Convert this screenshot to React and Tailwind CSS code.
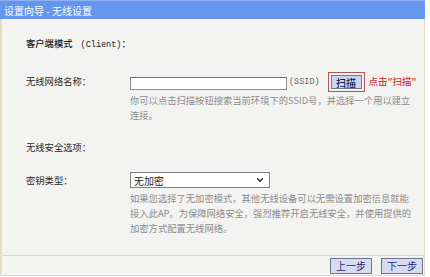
import { ChevronDown } from 'lucide-react';

// ── Wizard page: client mode wireless settings ────────────────────
const CJK = "font-['Noto_Sans_CJK_SC','Noto_Sans',sans-serif]";

function Help({ lines }) {
  return (
    <div className="text-[9.3px] leading-[15px] text-[#8c8c8c]">
      {lines.map(l => (
        <p key={l} className="whitespace-nowrap">{l}</p>
      ))}
    </div>
  );
}

function Btn({ children }) {
  return (
    <button className="w-[42px] h-[16px] border border-[#707090] bg-[#d6daf2] text-[10px] leading-[14px] text-[#1c2a6a]">
      {children}
    </button>
  );
}

export default function App() {
  return (
    <div className={`w-[430px] h-[277px] bg-white overflow-hidden ${CJK}`}>
      <div className="w-[425px] h-[276px] flex flex-col">

        {/* ── Title bar ── */}
        <div className="h-[19px] shrink-0 bg-[#6496f0] border-t border-[#8fb2f2] flex items-center pl-[4px] text-white text-[10px]">
          设置向导 - 无线设置
        </div>

        {/* ── Body ── */}
        <div className="flex-1 flex flex-col bg-[#f3f3f2] border-l-2 border-r border-[#e6dcbe]">
          <div className="flex-1 pl-[24px] pt-[17px] text-[9.3px] leading-[15px] text-[#333]">

            <p className="text-[#222] font-medium">
              客户端模式 <span className="font-['Liberation_Mono',monospace] text-[8.5px] ml-[6px]">(Client)</span>：
            </p>

            {/* SSID row */}
            <div className="flex mt-[19px]">
              <div className="w-[104px] pt-[2px] text-[#2a2a2a]">无线网络名称：</div>
              <div className="flex flex-col">
                <div className="flex items-start">
                  <div className="mt-[5px] w-[157px] h-[13px] bg-white border border-[#8c8c8c] border-t-[#6e6e6e]" />
                  <span className="mt-[3px] ml-[2px] font-['Liberation_Mono',monospace] text-[8.5px] text-[#666]">(SSID)</span>
                  <div className="ml-[8px] w-[37px] h-[20px] border border-[#b0565a] flex items-center justify-center">
                    <div className="w-[31px] h-[14px] bg-[#cdd6ee] border border-[#707a90] flex items-center justify-center text-[10px] text-[#10204a] font-medium">
                      扫描
                    </div>
                  </div>
                  <span className="ml-[4px] mt-[2px] text-[9.5px] text-[#d23a3a] font-medium">点击"扫描"</span>
                </div>
                <div className="mt-[1px]">
                  <Help lines={['你可以点击扫描按钮搜索当前环境下的SSID号，并选择一个用以建立', '连接。']} />
                </div>
              </div>
            </div>

            <p className="mt-[17px] text-[#2a2a2a]">无线安全选项：</p>

            {/* Security type row */}
            <div className="flex mt-[17px]">
              <div className="w-[104px] pt-[1px] text-[#2a2a2a]">密钥类型：</div>
              <div className="flex flex-col">
                <div className="w-[140px] h-[16px] bg-white border border-[#7f7f7f] flex items-center justify-between pl-[3px] pr-[4px] text-[10px] text-[#222]">
                  <span>无加密</span>
                  <ChevronDown size={10} strokeWidth={3} className="text-[#222]" />
                </div>
                <div className="mt-[3px]">
                  <Help lines={[
                    '如果您选择了无加密模式，其他无线设备可以无需设置加密信息就能',
                    '接入此AP。为保障网络安全，强烈推荐开启无线安全，并使用提供的',
                    '加密方式配置无线网络。',
                  ]} />
                </div>
              </div>
            </div>
          </div>

          {/* ── Footer ── */}
          <div className="h-[20px] shrink-0 border-t border-[#e2d6b0] flex items-center justify-end gap-[9px] pr-[1px]">
            <Btn>上一步</Btn>
            <Btn>下一步</Btn>
          </div>
        </div>
        <div className="h-[1px] bg-[#e6dcbe]" />
      </div>
    </div>
  );
}
